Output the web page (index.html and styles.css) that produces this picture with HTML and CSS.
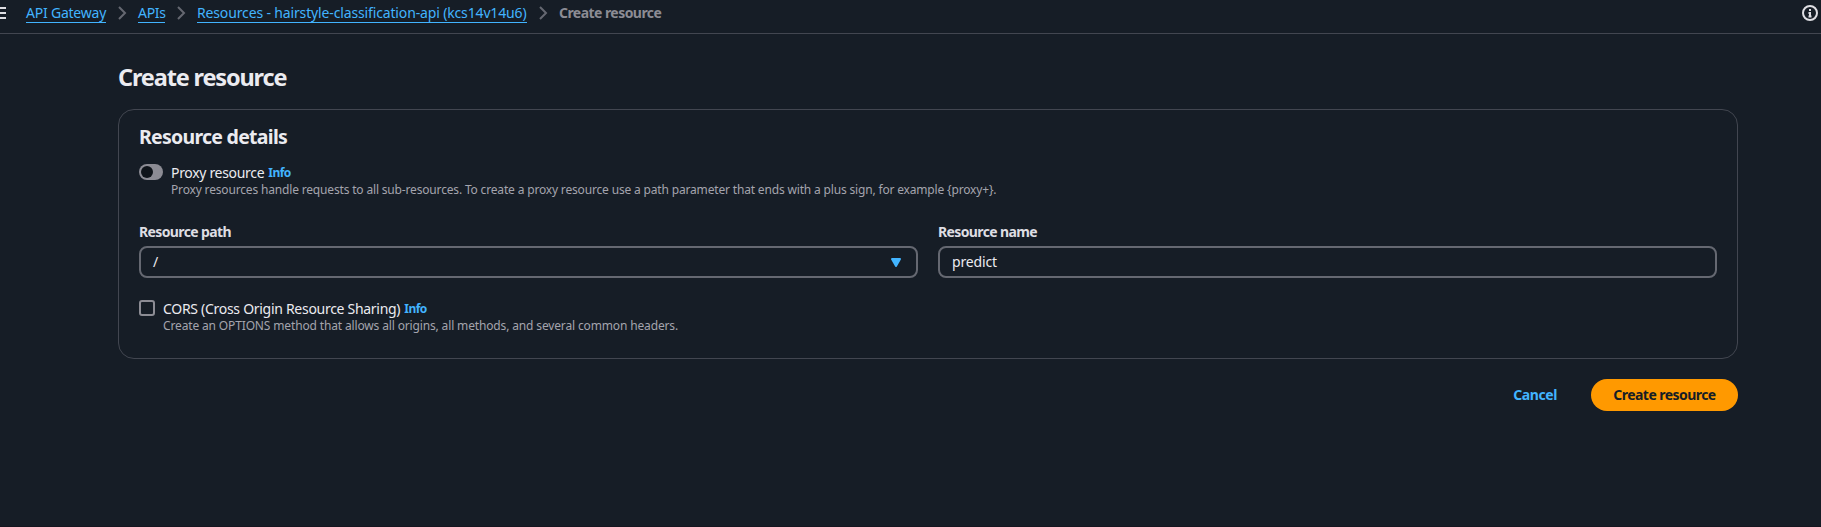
FILE: index.html
```
<!DOCTYPE html>
<html lang="en">
<head>
<meta charset="utf-8">
<title>Create resource</title>
<link rel="stylesheet" href="styles.css">
</head>
<body>
<header class="topbar">
  <svg class="menu-icon" width="16" height="16" viewBox="0 0 16 16"><path d="M0 3h16M0 8h16M0 13h16"/></svg>
  <nav class="crumbs">
    <a class="crumb crumb-service">API Gateway</a>
    <svg class="sep" width="16" height="16" viewBox="0 0 16 16"><path d="M5 2l6 6-6 6"/></svg>
    <a class="crumb crumb-apis">APIs</a>
    <svg class="sep" width="16" height="16" viewBox="0 0 16 16"><path d="M5 2l6 6-6 6"/></svg>
    <a class="crumb crumb-api">Resources - hairstyle-classification-api (kcs14v14u6)</a>
    <svg class="sep" width="16" height="16" viewBox="0 0 16 16"><path d="M5 2l6 6-6 6"/></svg>
    <span class="current">Create resource</span>
  </nav>
  <svg class="info-icon" width="16" height="16" viewBox="0 0 16 16"><circle cx="8" cy="8" r="7"/><path d="M8 4v2M6.5 8H8v4M6.5 11.5h3"/></svg>
</header>
<main class="page">
  <h1 class="title">Create resource</h1>
  <section class="panel">
    <h2 class="panel-title">Resource details</h2>
    <div class="option">
      <span class="toggle"><span class="knob"></span></span>
      <div class="option-text">
        <div class="option-label"><span class="proxy-label">Proxy resource</span><a class="info">Info</a></div>
        <div class="hint proxy-hint">Proxy resources handle requests to all sub-resources. To create a proxy resource use a path parameter that ends with a plus sign, for example {proxy+}.</div>
      </div>
    </div>
    <div class="fields">
      <div class="field">
        <span class="label">Resource path</span>
        <div class="control select"><span>/</span><svg class="caret" width="10" height="9" viewBox="0 0 10 9"><path d="M1 1h8L5 8z"/></svg></div>
      </div>
      <div class="field">
        <span class="label">Resource name</span>
        <div class="control"><span class="value">predict</span></div>
      </div>
    </div>
    <div class="option">
      <span class="checkbox"></span>
      <div class="option-text">
        <div class="option-label"><span class="cors-label">CORS (Cross Origin Resource Sharing)</span><a class="info">Info</a></div>
        <div class="hint cors-hint">Create an OPTIONS method that allows all origins, all methods, and several common headers.</div>
      </div>
    </div>
  </section>
  <div class="actions">
    <a class="cancel">Cancel</a>
    <a class="primary">Create resource</a>
  </div>
</main>
</body>
</html>
```
FILE: styles.css
```
* { box-sizing: border-box; }
body {
  margin: 0;
  height: 527px;
  overflow: hidden;
  background: #161d26;
  border-bottom: 1px solid #15151f;
  color: #ebebf0;
  font: 14px/20px "Noto Sans", "Open Sans", sans-serif;
  white-space: nowrap;
}
.topbar {
  display: flex;
  align-items: flex-start;
  height: 34px;
  padding: 5px 3px 0 0;
  border-bottom: 1px solid #424650;
}
.menu-icon { flex: none; margin: 0 0 0 -10px; fill: none; stroke: #dedee3; stroke-width: 2; }
.crumbs { display: flex; flex: 1; margin-left: 20px; }
.crumb { height: 18px; line-height: 16px; color: #42b4ff; border-bottom: 1px solid #42b4ff; }
.crumb-service { width: 80px; letter-spacing: -0.22px; }
.crumb-apis { width: 27px; letter-spacing: -0.3px; }
.crumb-api { width: 330px; letter-spacing: -0.145px; }
.current { line-height: 16px; color: #8c8c94; font-weight: 700; letter-spacing: -0.55px; }
.sep { flex: none; margin: 0 8px; fill: none; stroke: #656871; stroke-width: 2; }
.info-icon { flex: none; fill: none; stroke: #dedee3; stroke-width: 2; }
.page { width: 1620px; margin-left: 118px; padding-top: 28px; }
.title { margin: 0; height: 47px; font-size: 23.5px; line-height: 31px; font-weight: 700; letter-spacing: -1.15px; }
.panel {
  height: 250px;
  padding: 15px 20px 0;
  border: 1px solid #424650;
  border-radius: 16px;
}
.panel-title { margin: 0 0 13px; font-size: 19.5px; line-height: 24px; font-weight: 700; letter-spacing: -0.73px; }
.option { display: flex; align-items: flex-start; gap: 8px; }
.toggle { display: flex; align-items: center; width: 24px; height: 16px; margin-top: 2px; padding-left: 2px; border-radius: 8px; background: #8c8c94; }
.knob { width: 12px; height: 12px; border-radius: 50%; background: #0f141a; }
.checkbox { width: 16px; height: 16px; margin-top: 2px; border: 2px solid #8c8c94; border-radius: 3px; }
.option-label { height: 20px; display: flex; gap: 4px; line-height: 21px; }
.proxy-label { letter-spacing: -0.32px; }
.cors-label { letter-spacing: -0.29px; }
.info { color: #42b4ff; font-size: 12px; font-weight: 700; letter-spacing: -0.5px; line-height: 22px; }
.hint { color: #a4a4ad; font-size: 12px; line-height: 16px; }
.proxy-hint { letter-spacing: -0.167px; }
.cors-hint { letter-spacing: -0.145px; }
.fields { display: grid; grid-template-columns: 1fr 1fr; gap: 20px; margin: 24px 0 20px; }
.label { display: block; height: 24px; font-weight: 700; color: #dedee3; letter-spacing: -0.62px; }
.value { letter-spacing: -0.15px; }
.control {
  display: flex;
  align-items: center;
  justify-content: space-between;
  height: 32px;
  padding: 0 15px 0 12px;
  border: 2px solid #656871;
  border-radius: 8px;
}
.caret { fill: #42b4ff; stroke: #42b4ff; stroke-width: 2; stroke-linejoin: round; }
.actions { display: flex; justify-content: flex-end; align-items: center; gap: 34px; margin-top: 20px; font-weight: 700; }
.cancel { color: #42b4ff; letter-spacing: -0.4px; }
.primary { width: 147px; height: 32px; border-radius: 16px; background: #ff9900; color: #161d26; line-height: 32px; text-align: center; letter-spacing: -0.55px; }
```
